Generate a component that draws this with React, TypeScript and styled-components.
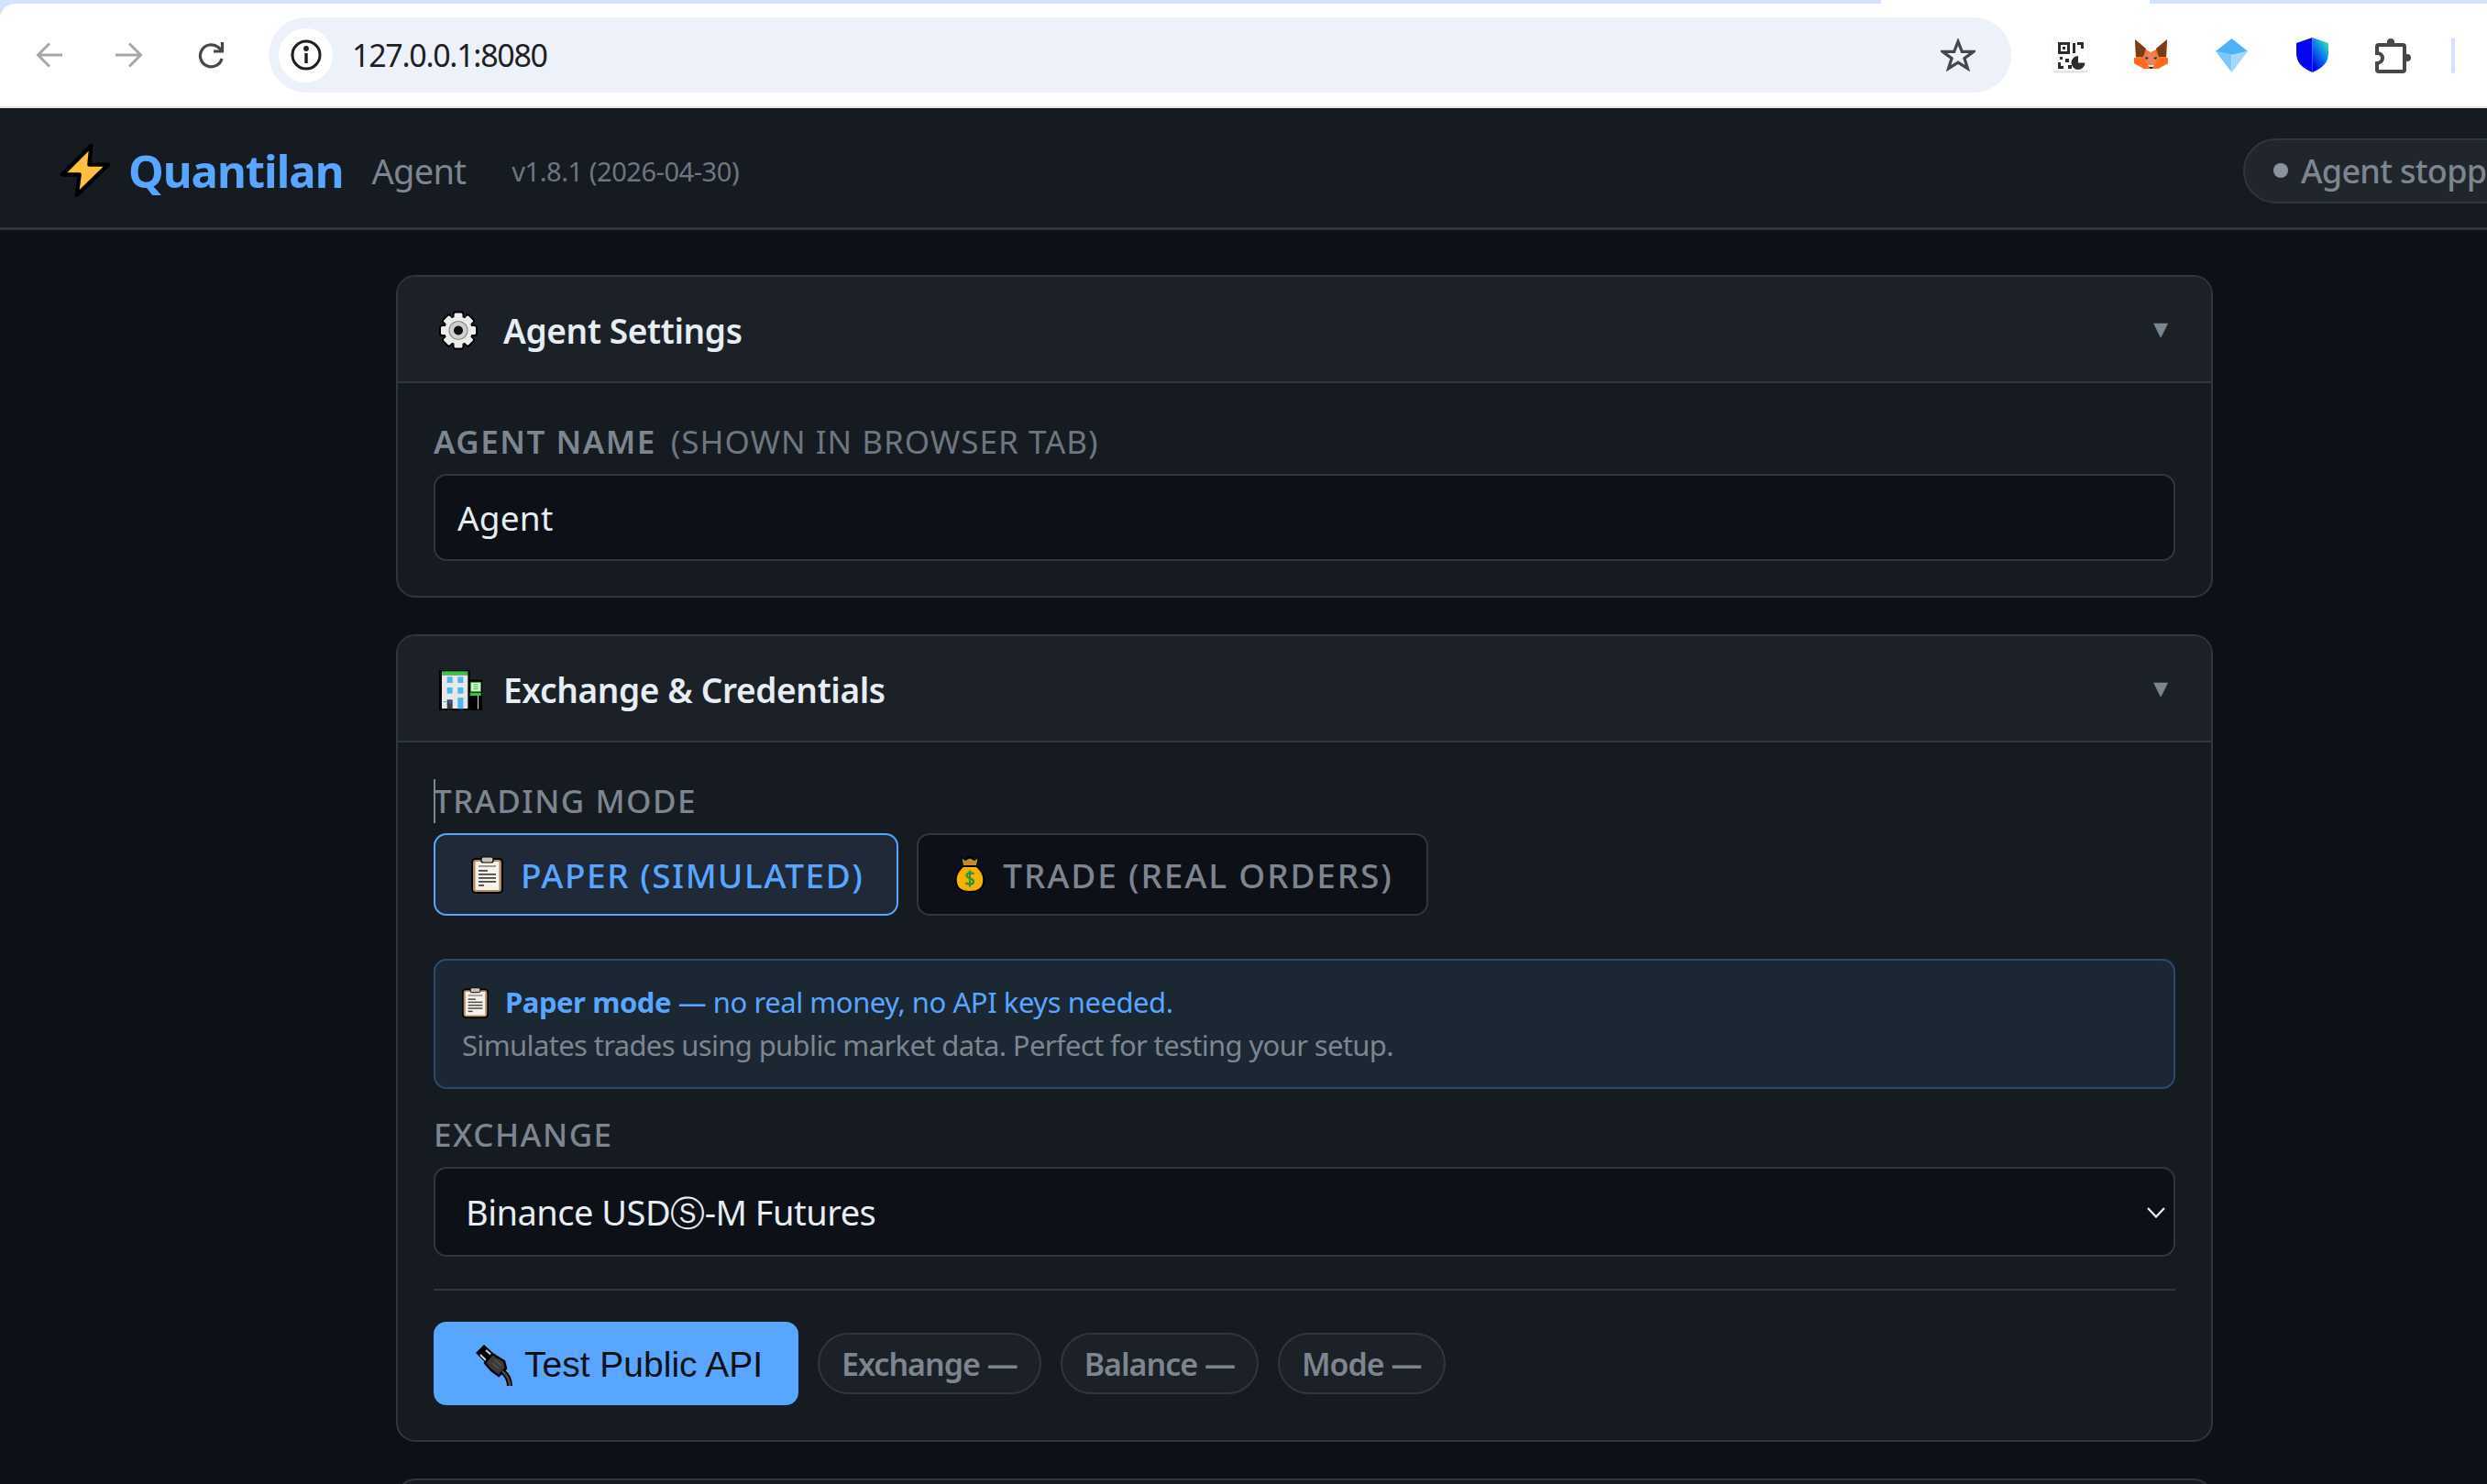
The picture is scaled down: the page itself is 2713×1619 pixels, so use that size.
import React from "react";
import styled, { createGlobalStyle } from "styled-components";

const GlobalStyle = createGlobalStyle`
  html, body {
    margin: 0;
    padding: 0;
    background: #0d1117;
    overflow: hidden;
  }
  * { box-sizing: border-box; }
  #root { width: 2713px; height: 1619px; overflow: hidden; }
`;

const sans = `"Noto Sans", "Open Sans", "DejaVu Sans", sans-serif`;

const Screen = styled.div`
  width: 2713px;
  height: 1619px;
  overflow: hidden;
  background: #0d1117;
  font-family: ${sans};
`;

/* browser chrome */
const Chrome = styled.div`
  background: #d3e3fd;
  width: 2713px;
`;
const TabStrip = styled.div`
  height: 4px;
  display: flex;
  justify-content: space-between;
`;
const TabGap = styled.div`
  width: 293px;
  margin-left: 2052px;
  margin-right: auto;
  background: #fff;
`;
const Toolbar = styled.div`
  height: 114px;
  background: #fff;
  border-top-left-radius: 16px;
  border-bottom: 2px solid #e4e4e4;
  display: flex;
  align-items: center;
  padding: 0 0 0 39px;
`;
const NavIcon = styled.svg<{ $gap: number }>`
  flex: none;
  margin-right: ${(p) => p.$gap}px;
`;
const Omnibox = styled.div`
  width: 1901px;
  height: 82px;
  border-radius: 41px;
  background: #edf2fa;
  display: flex;
  align-items: center;
  padding: 0 39px 0 11px;
  flex: none;
`;
const InfoBadge = styled.div`
  width: 59px;
  height: 59px;
  border-radius: 50%;
  background: #fff;
  display: flex;
  align-items: center;
  justify-content: center;
  flex: none;
`;
const Url = styled.div`
  margin-left: 21px;
  flex: 1;
  color: #1f1f1f;
  font-size: 34px;
  letter-spacing: -1.3px;
  line-height: 40px;
`;
const Extensions = styled.div`
  display: flex;
  align-items: center;
  gap: 49px;
  margin-left: 45px;
`;
const ExtSlot = styled.div`
  width: 39px;
  display: flex;
  justify-content: center;
`;
const ChromeDivider = styled.div`
  width: 4px;
  height: 39px;
  border-radius: 2px;
  background: #d3e3fd;
  margin-left: 44px;
`;

/* app */
const App_ = styled.div`
  width: 2846px;
`;
const Header = styled.header`
  height: 133px;
  background: #161b22;
  border-bottom: 3px solid #30363d;
  display: flex;
  align-items: center;
  padding: 6px 56px 0 65px;
`;
const Brand = styled.div`
  color: #58a6ff;
  font-size: 49px;
  font-weight: 700;
  letter-spacing: -1px;
  margin-left: 19px;
`;
const BrandSub = styled.div`
  color: #7d8590;
  font-size: 38px;
  margin-left: 31px;
  letter-spacing: -0.7px;
`;
const Version = styled.div`
  color: #6e7681;
  font-size: 29px;
  margin-left: 50px;
  letter-spacing: -0.45px;
`;
const StatusPill = styled.div`
  margin-left: auto;
  height: 71px;
  border-radius: 36px;
  border: 2px solid #30363d;
  background: #21262d;
  color: #7d8590;
  font-size: 36px;
  font-weight: 500;
  display: flex;
  align-items: center;
  padding: 0 34px 0 31px;
  letter-spacing: -0.7px;
  gap: 14px;
`;
const StatusDot = styled.span`
  width: 16px;
  height: 16px;
  border-radius: 50%;
  background: #8b949e;
`;
const Main = styled.main`
  padding-top: 49px;
  display: flex;
  flex-direction: column;
  align-items: center;
  gap: 40px;
`;
const Card = styled.section`
  width: 1982px;
  background: #161b22;
  border: 2px solid #30363d;
  border-radius: 21px;
  overflow: hidden;
  flex: none;
`;
const CardHeader = styled.div`
  height: 116px;
  background: #1c2128;
  border-bottom: 2px solid #30363d;
  display: flex;
  align-items: center;
  padding: 3px 47px 0 45px;
`;
const CardIcon = styled.div`
  width: 47px;
  flex: none;
  display: flex;
`;
const CardTitle = styled.h2`
  margin: 0 0 0 23px;
  font-size: 37px;
  font-weight: 600;
  letter-spacing: -0.35px;
  color: #e6edf3;
  flex: 1;
`;
const CardToggle = styled.span`
  color: #7d8590;
  font-family: "DejaVu Sans", sans-serif;
  font-size: 32px;
  line-height: 32px;
  margin-top: -6px;
`;
const CardBody = styled.div`
  padding: 40px 39px 38px;
`;
const FieldLabel = styled.label`
  display: block;
  position: relative;
  line-height: 48px;
  margin-bottom: 11px;
  font-size: 35px;
  font-weight: 500;
  letter-spacing: 1.5px;
  color: #7d8590;
  text-transform: uppercase;
`;
const LabelStrong = styled.span`
  font-weight: 600;
`;
const LabelHint = styled.span`
  font-weight: 400;
  letter-spacing: 1px;
  color: #6e7681;
  margin-left: 16px;
`;
const Caret = styled.span`
  position: absolute;
  left: 0;
  top: 0;
  width: 2px;
  height: 48px;
  background: #7d8590;
`;
const TextInput = styled.input`
  display: block;
  width: 100%;
  height: 95px;
  border: 2px solid #30363d;
  border-radius: 14px;
  background: #0d1117;
  color: #e6edf3;
  font-family: ${sans};
  font-size: 37px;
  letter-spacing: 0.2px;
  padding: 0 24px;
  outline: none;
`;
const ModeRow = styled.div`
  display: flex;
  gap: 20px;
`;
const ModeButton = styled.button<{ $active?: boolean; $tracking: number }>`
  height: 90px;
  padding: 0 36px 0 39px;
  border-radius: 14px;
  border: 2px solid ${(p) => (p.$active ? "#58a6ff" : "#30363d")};
  background: ${(p) => (p.$active ? "#1f2937" : "#0d1117")};
  color: ${(p) => (p.$active ? "#58a6ff" : "#7d8590")};
  font-family: ${sans};
  font-size: 37px;
  font-weight: 500;
  letter-spacing: ${(p) => p.$tracking}px;
  display: flex;
  align-items: center;
  gap: 19px;
`;
const Notice = styled.div`
  margin-top: 47px;
  height: 142px;
  border: 2px solid #2b4a70;
  border-radius: 14px;
  background: #1b2733;
  padding: 22px 29px;
  font-size: 31px;
  line-height: 47px;
`;
const NoticeLead = styled.div`
  color: #58a6ff;
  display: flex;
  align-items: center;
  white-space: pre;
  letter-spacing: -0.45px;
`;
const NoticeText = styled.div`
  color: #7d8590;
  letter-spacing: -0.65px;
`;
const NoticeStrong = styled.strong`
  font-weight: 700;
  margin-left: 18px;
`;
const ExchangeField = styled.div`
  margin-top: 26px;
`;
const SelectWrap = styled.div`
  position: relative;
`;
const SelectBox = styled.select`
  display: block;
  width: 100%;
  height: 98px;
  appearance: none;
  border: 2px solid #30363d;
  border-radius: 14px;
  background: #0d1117;
  color: #e6edf3;
  font-family: ${sans};
  font-size: 38px;
  letter-spacing: -0.5px;
  padding: 0 33px;
  outline: none;
`;
const SelectChevron = styled.svg`
  position: absolute;
  right: 11px;
  top: 44px;
`;
const Rule = styled.hr`
  border: 0;
  height: 2px;
  background: #30363d;
  margin: 35px 0 34px;
`;
const ActionRow = styled.div`
  display: flex;
  align-items: center;
  gap: 21px;
`;
const TestButton = styled.button`
  width: 398px;
  height: 91px;
  border: 0;
  border-radius: 14px;
  background: #58a6ff;
  color: #0d1117;
  font-family: "Liberation Sans", Arial, sans-serif;
  font-size: 39px;
  display: flex;
  align-items: center;
  padding: 2px 0 0 44px;
  gap: 13px;
`;
const StatusChip = styled.div`
  height: 67px;
  border: 2px solid #30363d;
  border-radius: 34px;
  background: #1c2128;
  color: #7d8590;
  font-size: 34px;
  font-weight: 600;
  letter-spacing: -1px;
  display: flex;
  align-items: center;
  padding: 0 24px;
`;
const EmptyCard = styled(Card)`
  height: 120px;
`;

const BackIcon = () => (
  <NavIcon $gap={58} width="29" height="28" viewBox="0 0 29 28" fill="none" stroke="#a8a8a8" strokeWidth="3">
    <path d="M29 14H3M15 1.500L2.500 14L15 26.500" />
  </NavIcon>
);
const ForwardIcon = () => (
  <NavIcon $gap={59} width="30" height="28" viewBox="0 0 30 28" fill="none" stroke="#a8a8a8" strokeWidth="3">
    <path d="M0 14H27M15 1.500L27.500 14L15 26.500" />
  </NavIcon>
);
const ReloadIcon = () => (
  <NavIcon $gap={48} width="30" height="30" viewBox="0 0 30 30" fill="none" stroke="#474747" strokeWidth="3.200">
    <path d="M27 19A12 12 0 1 1 23 6.500L27 10" />
    <path d="M27.500 1V11H18" />
  </NavIcon>
);
const InfoIcon = () => (
  <svg width="34" height="34" viewBox="0 0 34 34" fill="none" stroke="#1f1f1f" strokeWidth="3">
    <circle cx="17" cy="17" r="15" />
    <path d="M17 15V26" strokeWidth="3.400" />
    <circle cx="17" cy="10" r="1.400" fill="#1f1f1f" />
  </svg>
);
const StarIcon = () => (
  <svg width="38" height="36" viewBox="0 0 40 37" fill="none" stroke="#474747" strokeWidth="3.400">
    <path d="M20 3L24.600 14.800H37.500L27.300 22.300L31 34L20 27L9 34L12.700 22.300L2.500 14.800H15.400Z" />
  </svg>
);
const QrIcon = () => (
  <svg width="39" height="39" viewBox="0 0 39 39">
    <rect x="0.500" y="0.500" width="38" height="38" rx="4" fill="#e3e3e3" />
    <rect x="0.500" y="0.500" width="38" height="35.500" rx="4" fill="#fff" />
    <g fill="#2c2c2c">
      <path d="M6 5h13v13H6zM9 8v7h7V8z" fillRule="evenodd" />
      <rect x="11" y="10" width="3" height="3" />
      <rect x="22" y="6" width="3" height="11" />
      <path d="M27 5h7v7h-3V8h-4z" />
      <rect x="8" y="21" width="3" height="3" />
      <rect x="14" y="23" width="4" height="4" />
      <path d="M6 27h3v4h3v3H6z" />
      <rect x="17" y="30" width="4" height="4" />
      <path d="M28 20a7.500 7.500 0 1 0 7.500 7.500H28z" />
    </g>
  </svg>
);
const FoxIcon = () => (
  <svg width="37" height="36" viewBox="0 0 37 36">
    <path d="M1 1L13 12L18 15L24 12L36 1L35 20L37 27L26 33H11L0 27L2 20Z" fill="#f6762b" />
    <path d="M1 1L13 11L10 20L2 20Z" fill="#763d16" />
    <path d="M36 1L24 11L27 20L35 20Z" fill="#763d16" />
    <path d="M0 21L10 22L15 29L11 33L0 27Z" fill="#ff6a1f" />
    <path d="M37 21L27 22L22 29L26 33L37 27Z" fill="#ff6a1f" />
    <path d="M10 20L16 15H21L27 20L22 29H15Z" fill="#e9815a" />
    <path d="M12 20l4 1-3 2zM25 20l-4 1 3 2z" fill="#40200a" />
    <path d="M15 29L18.500 33L22 29Z" fill="#f3e2d6" />
    <path d="M16 31h5l-2.500 2.500z" fill="#2c1a0d" />
  </svg>
);
const DiamondIcon = () => (
  <svg width="35" height="37" viewBox="0 0 35 37">
    <path d="M0 14L17.500 0L35 14L17.500 18Z" fill="#4db1f9" />
    <path d="M0 14L17.500 18V37Z" fill="#7fc5fb" />
    <path d="M35 14L17.500 18V37Z" fill="#a5d7fd" />
  </svg>
);
const ShieldIcon = () => (
  <svg width="35" height="38" viewBox="0 0 35 38">
    <defs>
      <linearGradient id="shieldRight" x1="0.8" y1="0" x2="0.2" y2="0.9">
        <stop offset="0" stopColor="#3fe8a2" />
        <stop offset="0.45" stopColor="#0a86f0" />
        <stop offset="1" stopColor="#0404ea" />
      </linearGradient>
    </defs>
    <path d="M17.500 0V38C6 33 0 27 0 17V6Z" fill="#0505ef" />
    <path d="M17.500 0L35 6V17C35 27 29 33 17.500 38Z" fill="url(#shieldRight)" />
  </svg>
);
const PuzzleIcon = () => (
  <svg width="39" height="40" viewBox="0 0 39 40" fill="none" stroke="#474747" strokeWidth="4">
    <path d="M4 9H30Q32 9 32 11V36Q32 38 30 38H4Q2 38 2 36V29C10 28 10 18 2 18V11Q2 9 4 9Z" />
    <circle cx="17" cy="6" r="4" fill="#474747" stroke="none" />
    <circle cx="35" cy="23" r="4" fill="#474747" stroke="none" />
  </svg>
);

const BoltEmoji = () => (
  <svg width="56" height="60" viewBox="-2 -2 57 61">
    <path d="M33 1L1 33H20L17 56L52 22H31Z" fill="#fdbf3e" stroke="#000" strokeWidth="4.500" strokeLinejoin="round" />
  </svg>
);
const GearEmoji = () => (
  <svg width="42" height="43" viewBox="0 0 42 43">
    {[0, 45, 90, 135].map((a) => (
      <rect key={a} x="15" y="0.500" width="12" height="42" rx="2" fill="#000" transform={`rotate(${a} 21 21.500)`} />
    ))}
    {[0, 45, 90, 135].map((a) => (
      <rect key={a} x="16.500" y="2.500" width="9" height="38" rx="1.500" fill="#ececec" transform={`rotate(${a} 21 21.500)`} />
    ))}
    <circle cx="21" cy="21.500" r="15" fill="#ececec" />
    <circle cx="21" cy="21.500" r="10" fill="#cfcfcf" stroke="#8a8a8a" strokeWidth="1.200" />
    <circle cx="21" cy="21.500" r="5" fill="#111" />
  </svg>
);
const BuildingEmoji = () => (
  <svg width="47" height="44" viewBox="24 18 141 132">
    <rect x="24" y="18" width="101" height="132" fill="#000" />
    <rect x="125" y="50" width="40" height="100" fill="#000" />
    <rect x="33" y="34" width="85" height="110" fill="#e6e8ea" />
    <rect x="33" y="22" width="85" height="12" fill="#2fcb3a" />
    <rect x="50" y="40" width="18" height="20" fill="#4db8f0" />
    <rect x="85" y="40" width="18" height="20" fill="#4db8f0" />
    <rect x="50" y="75" width="18" height="20" fill="#4db8f0" />
    <rect x="85" y="75" width="18" height="20" fill="#4db8f0" />
    <rect x="85" y="108" width="18" height="37" fill="#4db8f0" />
    <rect x="50" y="115" width="18" height="30" fill="#3a3f46" />
    <rect x="55" y="118" width="9" height="9" fill="#2a63d0" />
    <rect x="38" y="120" width="9" height="3" fill="#3ac04a" />
    <rect x="128" y="58" width="32" height="30" fill="#e9f7e6" stroke="#2fb63c" strokeWidth="3" />
    <path d="M136 66H152M136 73H152M136 80H152" stroke="#2fb63c" strokeWidth="3" />
    <rect x="125" y="92" width="36" height="10" fill="#2fcb3a" />
    <rect x="150" y="102" width="3" height="44" fill="#d8d8d8" />
  </svg>
);
const ClipboardEmoji = ({ w, h }: { w: number; h: number }) => (
  <svg width={w} height={h} viewBox="0 0 35 42" style={{ flex: "none" }}>
    <rect x="1" y="4" width="33" height="37" rx="4" fill="#b08a64" stroke="#000" strokeWidth="2" />
    <rect x="4.500" y="7" width="26" height="31" fill="#f7f3ea" />
    <rect x="11" y="2" width="13" height="6" rx="2" fill="#c9c4bb" stroke="#000" strokeWidth="1.200" />
    <g fill="#4a4a4a">
      <rect x="8" y="11" width="19" height="2" fill="#9a9a9a" />
      <rect x="8" y="16" width="10" height="1.800" />
      <rect x="8" y="20" width="19" height="1.800" />
      <rect x="8" y="24" width="19" height="1.800" />
      <rect x="8" y="28" width="19" height="1.800" />
      <rect x="8" y="32" width="6" height="1.800" />
    </g>
  </svg>
);
const BagEmoji = () => (
  <svg width="34" height="42" viewBox="0 0 34 42" style={{ flex: "none" }}>
    <path d="M7 1L11 4L17 1L23 4L27 1L25 12C33 18 34 25 33 31C32 38 26 41 17 41C8 41 2 38 1 31C0 25 1 18 9 12Z" fill="#000" />
    <path d="M10 13H24C31 19 32 25 31 30C30 36 25 39 17 39C9 39 4 36 3 30C2 25 3 19 10 13Z" fill="#f5b301" />
    <path d="M8.500 3.500L12 6L17 3.500L22 6L25.500 3.500L24 11H10Z" fill="#c08a2c" />
    <path d="M21.500 20.500C20 19 14 18.500 13.500 22C13 26 21.500 24.500 21 29C20.500 32.500 14 32 12.500 30M17 16.500V34.500" fill="none" stroke="#27963c" strokeWidth="2.200" />
  </svg>
);
const PlugEmoji = () => (
  <svg width="42" height="46" viewBox="10 6 42 46" style={{ flex: "none" }}>
    <path d="M21 7L12 16L24 28L33 18Z" fill="#000" />
    <path d="M17 18L24 25M23 13L30 19" stroke="#d4d4d4" strokeWidth="2" />
    <path d="M30 17L22 27L29 35L37 41L45 33L43 25Z" fill="#3a3a3a" stroke="#000" strokeWidth="2.500" strokeLinejoin="round" />
    <path d="M30 27L37 33M33 24L40 30" stroke="#565656" strokeWidth="1.500" />
    <path d="M41 36C46 40 49 45 49 52" fill="none" stroke="#000" strokeWidth="6" />
    <path d="M41 36C46 40 49 45 49 52" fill="none" stroke="#4a4a4a" strokeWidth="2.500" />
  </svg>
);

export default function App() {
  return (
    <Screen>
      <GlobalStyle />
      <Chrome>
        <TabStrip>
          <TabGap />
        </TabStrip>
        <Toolbar>
          <BackIcon />
          <ForwardIcon />
          <ReloadIcon />
          <Omnibox>
            <InfoBadge>
              <InfoIcon />
            </InfoBadge>
            <Url>127.0.0.1:8080</Url>
            <StarIcon />
          </Omnibox>
          <Extensions>
            <ExtSlot><QrIcon /></ExtSlot>
            <ExtSlot><FoxIcon /></ExtSlot>
            <ExtSlot><DiamondIcon /></ExtSlot>
            <ExtSlot><ShieldIcon /></ExtSlot>
            <ExtSlot><PuzzleIcon /></ExtSlot>
          </Extensions>
          <ChromeDivider />
        </Toolbar>
      </Chrome>

      <App_>
        <Header>
          <BoltEmoji />
          <Brand>Quantilan</Brand>
          <BrandSub>Agent</BrandSub>
          <Version>v1.8.1 (2026-04-30)</Version>
          <StatusPill>
            <StatusDot />
            Agent stopped
          </StatusPill>
        </Header>

        <Main>
          <Card>
            <CardHeader>
              <CardIcon><GearEmoji /></CardIcon>
              <CardTitle>Agent Settings</CardTitle>
              <CardToggle>▾</CardToggle>
            </CardHeader>
            <CardBody>
              <FieldLabel>
                <LabelStrong>Agent Name</LabelStrong>
                <LabelHint>(shown in browser tab)</LabelHint>
              </FieldLabel>
              <TextInput defaultValue="Agent" />
            </CardBody>
          </Card>

          <Card>
            <CardHeader>
              <CardIcon><BuildingEmoji /></CardIcon>
              <CardTitle>Exchange &amp; Credentials</CardTitle>
              <CardToggle>▾</CardToggle>
            </CardHeader>
            <CardBody>
              <FieldLabel>
                <Caret />
                Trading Mode
              </FieldLabel>
              <ModeRow>
                <ModeButton $active $tracking={1.5}>
                  <ClipboardEmoji w={35} h={42} />
                  PAPER (SIMULATED)
                </ModeButton>
                <ModeButton $tracking={1.85}>
                  <BagEmoji />
                  TRADE (REAL ORDERS)
                </ModeButton>
              </ModeRow>
              <Notice>
                <NoticeLead>
                  <ClipboardEmoji w={29} h={35} />
                  <NoticeStrong>Paper mode</NoticeStrong> — no real money, no API keys needed.
                </NoticeLead>
                <NoticeText>Simulates trades using public market data. Perfect for testing your setup.</NoticeText>
              </Notice>
              <ExchangeField>
                <FieldLabel>Exchange</FieldLabel>
                <SelectWrap>
                  <SelectBox defaultValue="binance">
                    <option value="binance">Binance USDⓈ-M Futures</option>
                  </SelectBox>
                  <SelectChevron width="20" height="12" viewBox="0 0 20 12" fill="none" stroke="#e6edf3" strokeWidth="2.200">
                    <path d="M1 1L10 10.500L19 1" />
                  </SelectChevron>
                </SelectWrap>
              </ExchangeField>
              <Rule />
              <ActionRow>
                <TestButton>
                  <PlugEmoji />
                  Test Public API
                </TestButton>
                <StatusChip>Exchange —</StatusChip>
                <StatusChip>Balance —</StatusChip>
                <StatusChip>Mode —</StatusChip>
              </ActionRow>
            </CardBody>
          </Card>

          <EmptyCard />
        </Main>
      </App_>
    </Screen>
  );
}
